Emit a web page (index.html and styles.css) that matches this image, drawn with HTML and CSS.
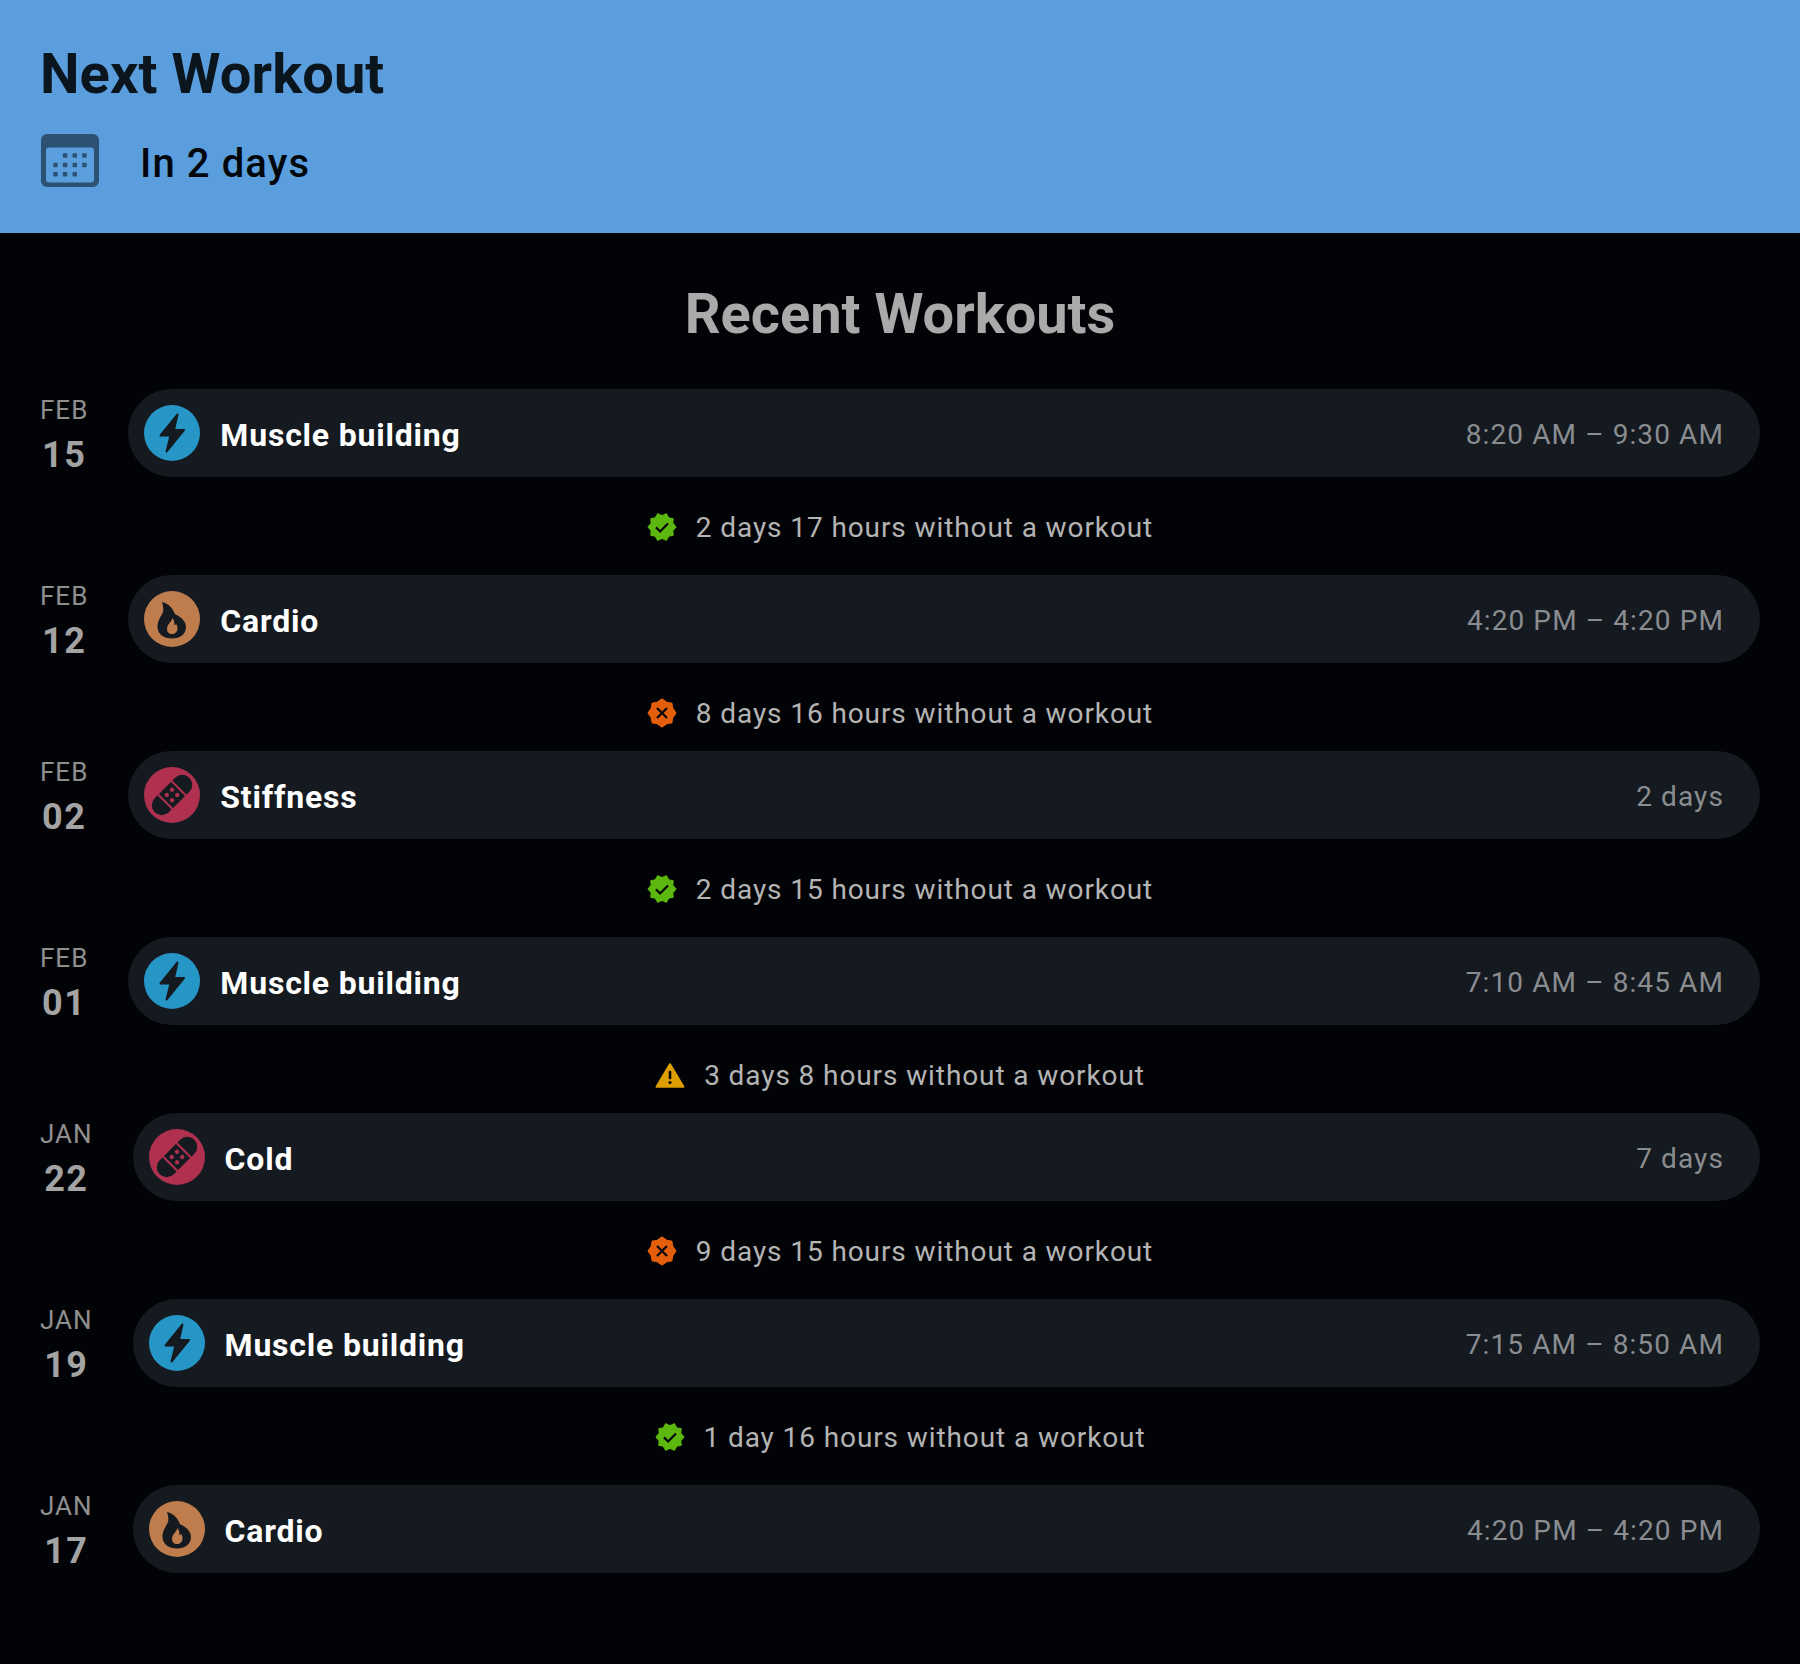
FILE: index.html
```html
<!DOCTYPE html>
<html lang="en">
<head>
  <meta charset="UTF-8">
  <meta name="viewport" content="width=device-width, initial-scale=1.0">
  <link rel="stylesheet" href="styles.css">
  <title>Workouts</title>
</head>

<body>

<svg class="sprite" aria-hidden="true">
  <symbol id="i-bolt" viewBox="0 0 56 56">
    <polygon points="33.5,9.5 16.5,30.5 26.5,30.5 22.5,46.5 40,25 30,25" fill="currentColor" stroke="currentColor" stroke-width="2" stroke-linejoin="round"/>
  </symbol>
  <symbol id="i-flame" viewBox="0 0 56 56">
    <path fill="currentColor" fill-rule="evenodd" d="M18 11C23 12 28 16 30 21C31 23.500 32 24 33 24C38 27 42 31 42 36C42 43 36 47.500 28 47.500C20 47.500 13.500 43 13.500 36C13.500 29 17 26 19 21C19.800 18 19 14 18 11ZM28.500 27C28 30.500 23 33 23 38C23 41 25 43 28 43C31 43 33.500 41 33.500 37.500C33.500 35.500 33 34 32 33C31.500 34 31 34.500 30.500 34C30.500 31.500 30 29 28.500 27Z"/>
  </symbol>
  <symbol id="i-bandage" viewBox="0 0 56 56">
    <g transform="rotate(-45 28 28)">
      <rect x="3.500" y="18" width="49" height="20" rx="10" fill="currentColor"/>
      <rect x="17.500" y="17" width="2" height="22" fill="var(--cut)"/>
      <rect x="36.500" y="17" width="2" height="22" fill="var(--cut)"/>
      <circle cx="24.300" cy="24.300" r="2.200" fill="var(--cut)"/>
      <circle cx="31.700" cy="24.300" r="2.200" fill="var(--cut)"/>
      <circle cx="24.300" cy="31.700" r="2.200" fill="var(--cut)"/>
      <circle cx="31.700" cy="31.700" r="2.200" fill="var(--cut)"/>
    </g>
  </symbol>
  <symbol id="i-check" viewBox="0 0 24 24">
    <path fill="currentColor" stroke="currentColor" stroke-linejoin="round" d="M23 12l-2.440-2.790.340-3.690-3.610-.820-1.890-3.200L12 2.960 8.600 1.500 6.710 4.690 3.100 5.500l.340 3.700L1 12l2.440 2.790-.340 3.700 3.610.820L8.600 22.500l3.400-1.470 3.400 1.460 1.890-3.190 3.610-.820-.340-3.690L23 12z"/>
    <path fill="none" stroke="#05070a" stroke-width="1.800" d="M7.200 12.300l3.300 3.300 6.300-6.400"/>
  </symbol>
  <symbol id="i-cross" viewBox="0 0 24 24">
    <polygon fill="currentColor" stroke="currentColor" stroke-width="2" stroke-linejoin="round" points="12,1.500 15.400,3.900 19.400,4.600 20.100,8.600 22.500,12 20.100,15.400 19.400,19.400 15.400,20.100 12,22.500 8.600,20.100 4.600,19.400 3.900,15.400 1.500,12 3.900,8.600 4.600,4.600 8.600,3.900"/>
    <path fill="none" stroke="#05070a" stroke-width="1.800" d="M8 8l8 8M16 8l-8 8"/>
  </symbol>
  <symbol id="i-warn" viewBox="0 0 28 24">
    <path fill="currentColor" stroke="currentColor" stroke-width="2" stroke-linejoin="round" d="M14 2L1.500 23H26.500Z"/>
    <rect x="12.800" y="8" width="2.400" height="8" rx="1" fill="#05070a"/>
    <circle cx="14" cy="19" r="1.500" fill="#05070a"/>
  </symbol>
</svg>

<header class="next">
  <h1 class="next-title">Next Workout</h1>
  <div class="next-when">
    <svg class="cal" viewBox="0 0 58 53">
      <path fill="#2c5173" fill-rule="evenodd" d="M6 0H52A6 6 0 0 1 58 6V47A6 6 0 0 1 52 53H6A6 6 0 0 1 0 47V6A6 6 0 0 1 6 0ZM8 13.500A3 3 0 0 0 5 16.500V45.500A3 3 0 0 0 8 48.500H50A3 3 0 0 0 53 45.500V16.500A3 3 0 0 0 50 13.500Z"/>
      <g fill="#2c5173">
        <rect x="21.800" y="19.300" width="4.500" height="4.500" rx="1"/>
        <rect x="31.500" y="19.300" width="4.500" height="4.500" rx="1"/>
        <rect x="41.200" y="19.300" width="4.500" height="4.500" rx="1"/>
        <rect x="12.200" y="28.700" width="4.500" height="4.500" rx="1"/>
        <rect x="21.800" y="28.700" width="4.500" height="4.500" rx="1"/>
        <rect x="31.500" y="28.700" width="4.500" height="4.500" rx="1"/>
        <rect x="41.200" y="28.700" width="4.500" height="4.500" rx="1"/>
        <rect x="12.200" y="38" width="4.500" height="4.500" rx="1"/>
        <rect x="21.800" y="38" width="4.500" height="4.500" rx="1"/>
        <rect x="31.500" y="38" width="4.500" height="4.500" rx="1"/>
      </g>
    </svg>
    <span class="next-text">In 2 days</span>
  </div>
</header>

<main class="recent">
  <h2 class="recent-title">Recent Workouts</h2>

  <div class="row">
    <div class="date"><span class="mon">FEB</span><span class="day">15</span></div>
    <div class="pill">
      <svg class="badge muscle"><use href="#i-bolt"/></svg>
      <span class="name">Muscle building</span>
      <span class="time">8:20 AM – 9:30 AM</span>
    </div>
  </div>
  <div class="rest wide"><svg class="mark good"><use href="#i-check"/></svg>2 days 17 hours without a workout</div>

  <div class="row">
    <div class="date"><span class="mon">FEB</span><span class="day">12</span></div>
    <div class="pill">
      <svg class="badge cardio"><use href="#i-flame"/></svg>
      <span class="name">Cardio</span>
      <span class="time">4:20 PM – 4:20 PM</span>
    </div>
  </div>
  <div class="rest"><svg class="mark bad"><use href="#i-cross"/></svg>8 days 16 hours without a workout</div>

  <div class="row">
    <div class="date"><span class="mon">FEB</span><span class="day">02</span></div>
    <div class="pill">
      <svg class="badge injury"><use href="#i-bandage"/></svg>
      <span class="name">Stiffness</span>
      <span class="time">2 days</span>
    </div>
  </div>
  <div class="rest wide"><svg class="mark good"><use href="#i-check"/></svg>2 days 15 hours without a workout</div>

  <div class="row">
    <div class="date"><span class="mon">FEB</span><span class="day">01</span></div>
    <div class="pill">
      <svg class="badge muscle"><use href="#i-bolt"/></svg>
      <span class="name">Muscle building</span>
      <span class="time">7:10 AM – 8:45 AM</span>
    </div>
  </div>
  <div class="rest"><svg class="mark warn"><use href="#i-warn"/></svg>3 days 8 hours without a workout</div>

  <div class="row">
    <div class="date"><span class="mon">JAN</span><span class="day">22</span></div>
    <div class="pill">
      <svg class="badge injury"><use href="#i-bandage"/></svg>
      <span class="name">Cold</span>
      <span class="time">7 days</span>
    </div>
  </div>
  <div class="rest wide"><svg class="mark bad"><use href="#i-cross"/></svg>9 days 15 hours without a workout</div>

  <div class="row">
    <div class="date"><span class="mon">JAN</span><span class="day">19</span></div>
    <div class="pill">
      <svg class="badge muscle"><use href="#i-bolt"/></svg>
      <span class="name">Muscle building</span>
      <span class="time">7:15 AM – 8:50 AM</span>
    </div>
  </div>
  <div class="rest wide"><svg class="mark good"><use href="#i-check"/></svg>1 day 16 hours without a workout</div>

  <div class="row">
    <div class="date"><span class="mon">JAN</span><span class="day">17</span></div>
    <div class="pill">
      <svg class="badge cardio"><use href="#i-flame"/></svg>
      <span class="name">Cardio</span>
      <span class="time">4:20 PM – 4:20 PM</span>
    </div>
  </div>
</main>

</body>
</html>
```

FILE: styles.css
```css
body {
  margin: 0;
  background-color: #020306;
  font-family: Roboto, "Liberation Sans", sans-serif;
}

.sprite {
  position: absolute;
  width: 0;
  height: 0;
}

/* top card */
.next {
  height: 233px;
  box-sizing: border-box;
  padding: 40px 41px 0;
  background-color: #5a9edd;
}

.next-title {
  margin: 0 0 0 -1px;
  font-size: 56px;
  line-height: 68px;
  font-weight: 700;
  letter-spacing: 0.1px;
  color: #0b151e;
}

.next-when {
  display: flex;
  align-items: center;
  gap: 41px;
  margin-top: 26px;
  font-size: 40px;
  font-weight: 500;
  letter-spacing: 1.1px;
  color: #03060a;
}

.next-text {
  padding-top: 6px;
}

.cal {
  width: 58px;
  height: 53px;
}

/* list */
.recent {
  padding: 0 40px;
}

.recent-title {
  margin: 0;
  padding: 43px 0 37px;
  text-align: center;
  font-size: 56px;
  line-height: 76px;
  font-weight: 700;
  color: #aaaaaa;
}

.row {
  display: flex;
  gap: 40px;
  height: 88px;
}

.date {
  display: flex;
  flex-direction: column;
  align-items: center;
  padding-top: 5px;
}

.mon {
  font-size: 26px;
  line-height: 32px;
  letter-spacing: 1px;
  color: #8f8f8f;
}

.day {
  margin-top: 7px;
  font-size: 36px;
  line-height: 44px;
  font-weight: 700;
  letter-spacing: 1.5px;
  color: #a3a3a3;
}

.pill {
  flex: 1;
  display: flex;
  align-items: center;
  gap: 20px;
  padding: 0 36px 0 16px;
  border-radius: 44px;
  background-color: #151a20;
}

.badge {
  width: 56px;
  height: 56px;
  border-radius: 50%;
  color: #151a20;
}

.muscle { background-color: #2596c6; }
.cardio { background-color: #bf7c4d; }
.injury { background-color: #b0304f; --cut: #b0304f; }

.name {
  padding-top: 4px;
  font-size: 32px;
  font-weight: 700;
  letter-spacing: 0.8px;
  color: #ffffff;
}

.time {
  margin-left: auto;
  padding-top: 2px;
  font-size: 28px;
  letter-spacing: 1.1px;
  color: #8a8d90;
}

/* gap between two workouts */
.rest {
  display: flex;
  align-items: center;
  justify-content: center;
  gap: 19px;
  height: 88px;
  padding-top: 12px;
  box-sizing: border-box;
  font-size: 28px;
  letter-spacing: 0.9px;
  color: #b4b4b4;
}

.rest.wide {
  margin-bottom: 10px;
}

.mark {
  width: 30px;
  height: 30px;
}

.good { color: #5cb80f; }
.bad { color: #e45f0b; }
.warn { color: #dd9f00; }
```
